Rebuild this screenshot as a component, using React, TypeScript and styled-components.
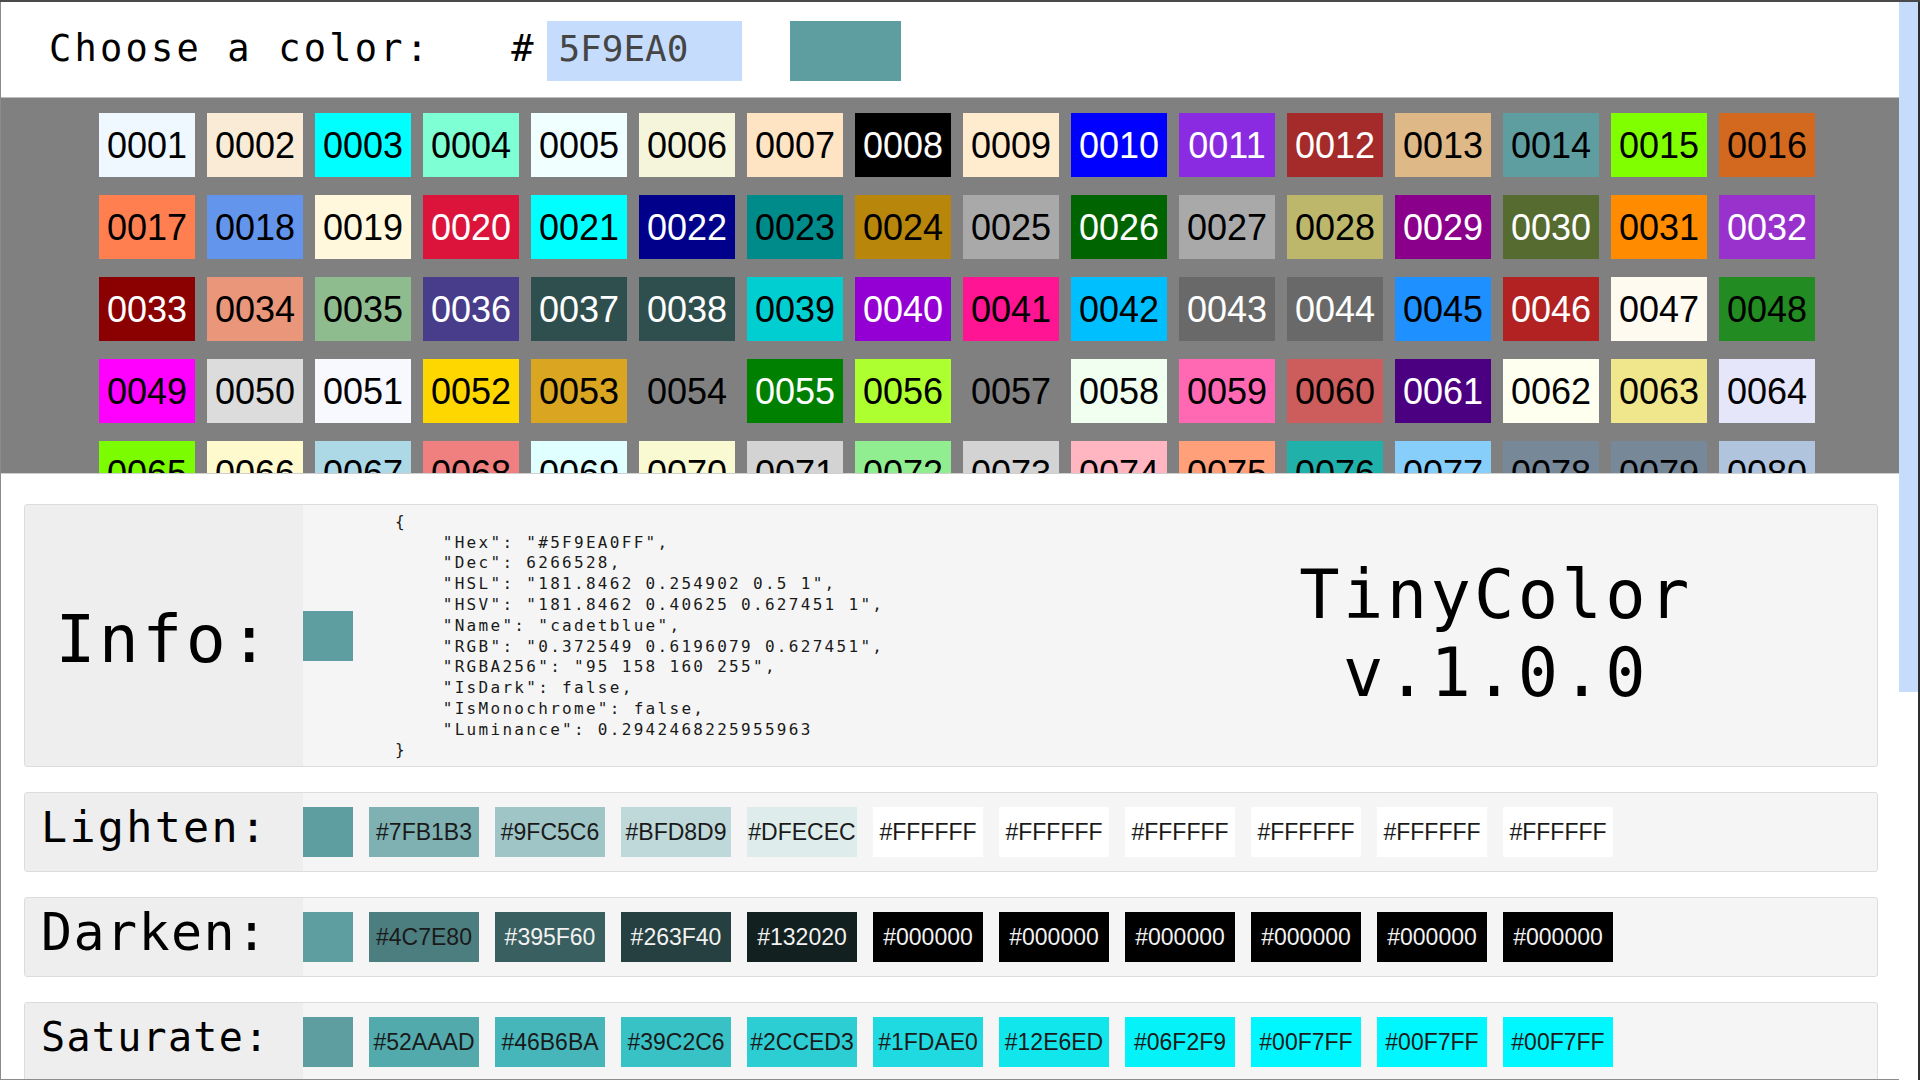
import React from "react";
import styled, { createGlobalStyle } from "styled-components";

const MONO = '"DejaVu Sans Mono", monospace';
const SANS = '"Liberation Sans", Arial, sans-serif';

const Global = createGlobalStyle`
  html, body { margin: 0; padding: 0; background: #fff; overflow: hidden; }
  * { box-sizing: border-box; }
`;

const NAMED: string[] = [
  "#F0F8FF", "#FAEBD7", "#00FFFF", "#7FFFD4", "#F0FFFF", "#F5F5DC", "#FFE4C4", "#000000",
  "#FFEBCD", "#0000FF", "#8A2BE2", "#A52A2A", "#DEB887", "#5F9EA0", "#7FFF00", "#D2691E",
  "#FF7F50", "#6495ED", "#FFF8DC", "#DC143C", "#00FFFF", "#00008B", "#008B8B", "#B8860B",
  "#A9A9A9", "#006400", "#A9A9A9", "#BDB76B", "#8B008B", "#556B2F", "#FF8C00", "#9932CC",
  "#8B0000", "#E9967A", "#8FBC8F", "#483D8B", "#2F4F4F", "#2F4F4F", "#00CED1", "#9400D3",
  "#FF1493", "#00BFFF", "#696969", "#696969", "#1E90FF", "#B22222", "#FFFAF0", "#228B22",
  "#FF00FF", "#DCDCDC", "#F8F8FF", "#FFD700", "#DAA520", "#808080", "#008000", "#ADFF2F",
  "#808080", "#F0FFF0", "#FF69B4", "#CD5C5C", "#4B0082", "#FFFFF0", "#F0E68C", "#E6E6FA",
  "#7CFC00", "#FFFACD", "#ADD8E6", "#F08080", "#E0FFFF", "#FAFAD2", "#D3D3D3", "#90EE90",
  "#D3D3D3", "#FFB6C1", "#FFA07A", "#20B2AA", "#87CEFA", "#778899", "#778899", "#B0C4DE",
];

function isDark(hex: string): boolean {
  const h = hex.replace("#", "");
  const ch = (i: number) => {
    const c = parseInt(h.slice(i, i + 2), 16) / 255;
    return c <= 0.03928 ? c / 12.92 : Math.pow((c + 0.055) / 1.055, 2.4);
  };
  const lum = 0.2126 * ch(0) + 0.7152 * ch(2) + 0.0722 * ch(4);
  return lum < 0.175;
}

const Frame = styled.div`
  display: flex;
  width: 1920px;
  height: 1080px;
  border-top: 2px solid #4a4a4a;
  overflow: hidden;
  background: #fff;
`;

const Main = styled.div`
  flex: 1;
  min-width: 0;
  display: flex;
  flex-direction: column;
  border-left: 1px solid #8c8c8c;
  border-bottom: 1px solid #8c8c8c;
  overflow: hidden;
`;

const Scrollbar = styled.div`
  width: 21px;
  flex-shrink: 0;
  background: #fff;
  border-right: 2px solid #2e2e2e;
`;

const Thumb = styled.div`
  height: 690px;
  background: #c6dcfc;
`;

const Header = styled.div`
  height: 96px;
  flex-shrink: 0;
  display: flex;
  align-items: center;
  padding: 3px 0 0 48px;
  border-bottom: 1px solid #bdbdbd;
  background: #fff;
`;

const HeaderLabel = styled.span<{ $spacing: number; $gap?: number }>`
  font-family: ${MONO};
  font-size: 37px;
  line-height: 43px;
  letter-spacing: ${(p) => p.$spacing}px;
  color: #000;
  margin: 0 0 6px ${(p) => p.$gap ?? 0}px;
  white-space: pre;
`;

const HexInput = styled.input`
  width: 195px;
  height: 60px;
  margin-left: 14px;
  border: none;
  outline: none;
  padding: 0 0 5px 11px;
  background: #c6dcfc;
  font-family: ${MONO};
  font-size: 36px;
  color: #454545;
  letter-spacing: normal;
`;

const HeaderSwatch = styled.div<{ $color: string }>`
  width: 111px;
  height: 60px;
  margin-left: 48px;
  background: ${(p) => p.$color};
`;

const GridArea = styled.div`
  height: 376px;
  flex-shrink: 0;
  background: #808080;
  border-bottom: 1px solid #cfcfcf;
  padding: 15px 0 0 98px;
  overflow: hidden;
  display: grid;
  grid-template-columns: repeat(16, 96px);
  grid-auto-rows: 64px;
  column-gap: 12px;
  row-gap: 18px;
  align-content: start;
`;

const Tile = styled.div<{ $bg: string; $fg: string }>`
  display: flex;
  align-items: center;
  justify-content: center;
  padding-top: 2px;
  background: ${(p) => p.$bg};
  color: ${(p) => p.$fg};
  font-family: ${SANS};
  font-size: 36px;
`;

const Sections = styled.div`
  display: flex;
  flex-direction: column;
  gap: 25px;
  padding: 30px 21px 0 23px;
`;

const Box = styled.div<{ $height: number }>`
  display: flex;
  flex-shrink: 0;
  height: ${(p) => p.$height}px;
  border: 1px solid #dcdcdc;
  border-radius: 3px;
  background: #f5f5f5;
  overflow: hidden;
`;

const LabelCell = styled.div<{ $center?: boolean }>`
  width: 278px;
  flex-shrink: 0;
  display: flex;
  align-items: center;
  justify-content: ${(p) => (p.$center ? "center" : "flex-start")};
  padding-left: ${(p) => (p.$center ? 0 : 16)}px;
  background: #eeeeee;
`;

const BigLabel = styled.span<{ $size: number; $spacing: number; $shift: number }>`
  font-family: ${MONO};
  font-size: ${(p) => p.$size}px;
  letter-spacing: ${(p) => p.$spacing}px;
  color: #000;
  white-space: pre;
  padding-top: ${(p) => (p.$shift > 0 ? p.$shift : 0)}px;
  padding-bottom: ${(p) => (p.$shift < 0 ? -p.$shift : 0)}px;
`;

const Swatch = styled.div<{ $color: string }>`
  width: 50px;
  height: 50px;
  flex-shrink: 0;
  align-self: center;
  background: ${(p) => p.$color};
`;

const JsonCol = styled.div`
  flex: 1 1 0;
  min-width: 0;
  display: flex;
  align-items: center;
`;

const Json = styled.pre`
  margin: 0 0 0 42px;
  padding-top: 2px;
  font-family: ${MONO};
  font-size: 16px;
  line-height: 20.8px;
  letter-spacing: 2.3px;
  color: #1a1a1a;
`;

const TitleCol = styled.div`
  flex: 1 1 0;
  min-width: 0;
  display: flex;
  align-items: center;
  justify-content: center;
  text-align: center;
  padding-bottom: 4px;
  font-family: ${MONO};
  font-size: 67px;
  line-height: 78px;
  letter-spacing: 3.4px;
  color: #000;
`;

const ChipRow = styled.div`
  display: flex;
  align-items: center;
  gap: 16px;
`;

const Chip = styled.div<{ $bg: string; $fg: string }>`
  width: 110px;
  height: 50px;
  display: flex;
  align-items: center;
  justify-content: center;
  background: ${(p) => p.$bg};
  color: ${(p) => p.$fg};
  font-family: ${SANS};
  font-size: 23px;
`;

const BASE = "#5F9EA0";

const JSON_TEXT = `{
    "Hex": "#5F9EA0FF",
    "Dec": 6266528,
    "HSL": "181.8462 0.254902 0.5 1",
    "HSV": "181.8462 0.40625 0.627451 1",
    "Name": "cadetblue",
    "RGB": "0.372549 0.6196079 0.627451",
    "RGBA256": "95 158 160 255",
    "IsDark": false,
    "IsMonochrome": false,
    "Luminance": 0.2942468225955963
}`;

const W = "#FFFFFF";
const K = "#000000";
const F = "#00F7FF";

const ROWS: { label: string; size: number; spacing: number; colors: string[] }[] = [
  { label: "Lighten:", size: 43.4, spacing: 2.3, colors: ["#7FB1B3", "#9FC5C6", "#BFD8D9", "#DFECEC", W, W, W, W, W, W] },
  { label: "Darken:", size: 51.7, spacing: 1.4, colors: ["#4C7E80", "#395F60", "#263F40", "#132020", K, K, K, K, K, K] },
  { label: "Saturate:", size: 40, spacing: 1.3, colors: ["#52AAAD", "#46B6BA", "#39C2C6", "#2CCED3", "#1FDAE0", "#12E6ED", "#06F2F9", F, F, F] },
];

export default function App() {
  return (
    <>
      <Global />
      <Frame>
        <Main>
          <Header>
            <HeaderLabel $spacing={3.2}>Choose a color:</HeaderLabel>
            <HeaderLabel $spacing={0} $gap={80}>#</HeaderLabel>
            <HexInput readOnly value="5F9EA0" />
            <HeaderSwatch $color={BASE} />
          </Header>
          <GridArea>
            {NAMED.map((c, i) => (
              <Tile key={i} $bg={c} $fg={isDark(c) ? "#ffffff" : "#000000"}>
                {String(i + 1).padStart(4, "0")}
              </Tile>
            ))}
          </GridArea>
          <Sections>
            <Box $height={263}>
              <LabelCell $center>
                <BigLabel $size={66.5} $spacing={3.4} $shift={7}>Info:</BigLabel>
              </LabelCell>
              <Swatch $color={BASE} />
              <JsonCol>
                <Json>{JSON_TEXT}</Json>
              </JsonCol>
              <TitleCol>
                TinyColor
                <br />
                v.1.0.0
              </TitleCol>
            </Box>
            {ROWS.map((r) => (
              <Box key={r.label} $height={80}>
                <LabelCell>
                  <BigLabel $size={r.size} $spacing={r.spacing} $shift={-11}>{r.label}</BigLabel>
                </LabelCell>
                <ChipRow>
                  <Swatch $color={BASE} />
                  {r.colors.map((c, i) => (
                    <Chip key={i} $bg={c} $fg={isDark(c) ? "#f2f2f2" : "#1a1a1a"}>
                      {c}
                    </Chip>
                  ))}
                </ChipRow>
              </Box>
            ))}
          </Sections>
        </Main>
        <Scrollbar>
          <Thumb />
        </Scrollbar>
      </Frame>
    </>
  );
}
